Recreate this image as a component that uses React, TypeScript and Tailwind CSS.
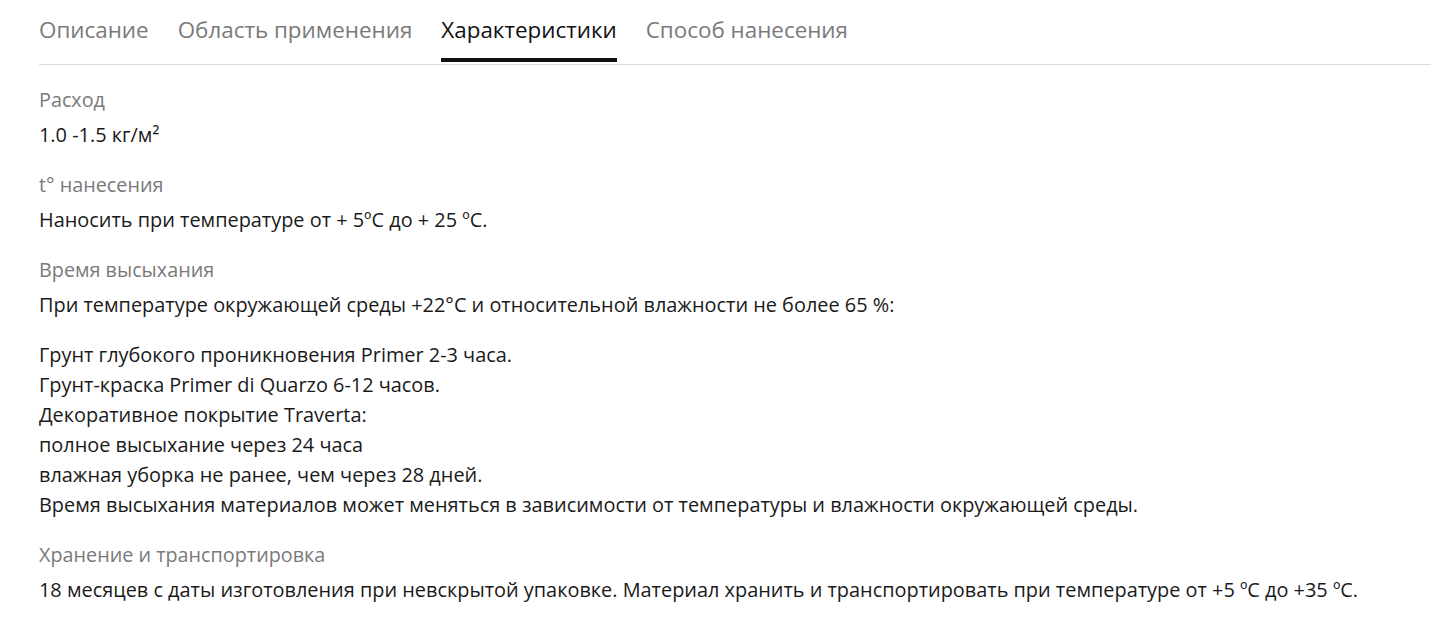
const TABS = ['Описание', 'Область применения', 'Характеристики', 'Способ нанесения'];

const Label = ({ children }: { children: React.ReactNode }) => (
  <div className="mb-[5px] text-[19.8px] leading-[30px] text-[#7a7a7a]">{children}</div>
);

export default function App() {
  const active = 2;

  return (
    <div className="min-h-[625px] bg-white pl-[39px] font-['Open_Sans',sans-serif] text-[#1a1a1a]">
      <nav className="flex items-end gap-[29px] border-b border-[#dcdcdc]">
        {TABS.map((tab, i) => (
          <button
            key={tab}
            className={
              'mb-[2px] border-b-4 pb-[13px] pt-[15px] text-[22.4px] leading-[30px] ' +
              (i === active ? 'border-[#111] text-[#111]' : 'border-transparent text-[#7a7a7a]')
            }
          >
            {tab}
          </button>
        ))}
      </nav>

      <div className="pt-[20px] text-[19.9px] leading-[30px]">
        <Label>Расход</Label>
        <div className="mb-[20px]">1.0 -1.5 кг/м²</div>

        <Label>t° нанесения</Label>
        <div className="mb-[20px]">Наносить при температуре от + 5ºC до + 25 ºC.</div>

        <Label>Время высыхания</Label>
        <p className="mb-[20px]">
          При температуре окружающей среды +22°C и относительной влажности не более 65 %:
        </p>
        <p className="mb-[20px]">
          Грунт глубокого проникновения Primer 2-3 часа.
          <br />
          Грунт-краска Primer di Quarzo 6-12 часов.
          <br />
          Декоративное покрытие Traverta:
          <br />
          полное высыхание через 24 часа
          <br />
          влажная уборка не ранее, чем через 28 дней.
          <br />
          Время высыхания материалов может меняться в зависимости от температуры и влажности окружающей среды.
        </p>

        <Label>Хранение и транспортировка</Label>
        <div>
          18 месяцев с даты изготовления при невскрытой упаковке. Материал хранить и транспортировать при
          температуре от +5 ºC до +35 ºC.
        </div>
      </div>
    </div>
  );
}
